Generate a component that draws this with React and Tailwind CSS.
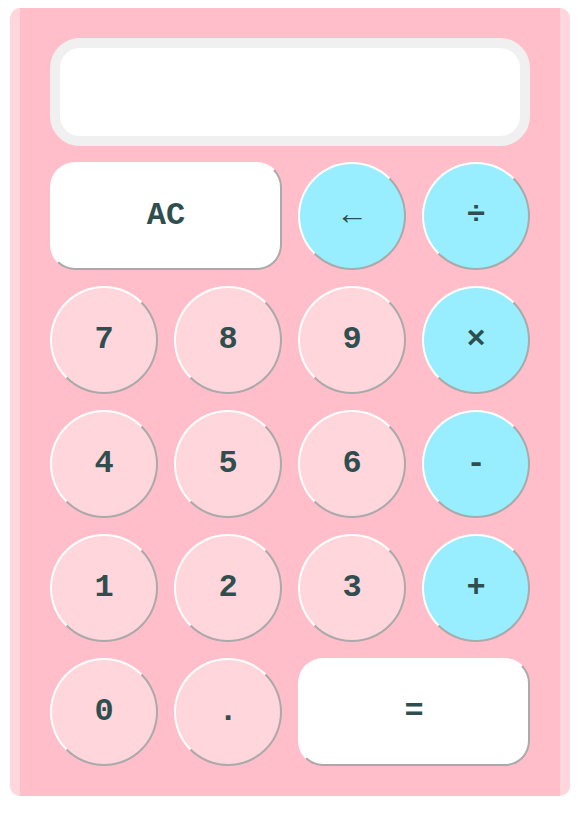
import React from "react";

const keys = [
  { label: "AC", kind: "wide" },
  { label: "←", kind: "op" },
  { label: "÷", kind: "op" },
  { label: "7" }, { label: "8" }, { label: "9" }, { label: "×", kind: "op" },
  { label: "4" }, { label: "5" }, { label: "6" }, { label: "-", kind: "op" },
  { label: "1" }, { label: "2" }, { label: "3" }, { label: "+", kind: "op" },
  { label: "0" }, { label: "." }, { label: "=", kind: "wide" },
];

function Key({ label, kind }) {
  const base =
    "h-[108px] flex items-center justify-center border-2 border-t-white border-l-white border-r-[#aaaaaa] border-b-[#aaaaaa] text-[32px] font-bold text-[#2f4f4f] font-['Liberation_Mono',monospace]";
  if (kind === "wide") {
    return <button className={`${base} col-span-2 rounded-[25px] bg-white`}>{label}</button>;
  }
  if (kind === "op") {
    return <button className={`${base} w-[108px] rounded-full bg-[#98eefe]`}>{label}</button>;
  }
  return <button className={`${base} w-[108px] rounded-full bg-[#ffd6dc]`}>{label}</button>;
}

export default function App() {
  return (
    <div className="ml-[10px] mt-[8px] w-[560px] rounded-[10px] bg-[#ffbec9] border-x-[10px] border-[#ffd6dc] px-[30px] py-[30px] flex flex-col gap-4">
      <div className="h-[108px] rounded-[30px] border-[10px] border-[#f0f0f0] bg-white" />
      <div className="grid grid-cols-[repeat(4,108px)] gap-4">
        {keys.map((k, i) => (
          <Key key={i} {...k} />
        ))}
      </div>
    </div>
  );
}
